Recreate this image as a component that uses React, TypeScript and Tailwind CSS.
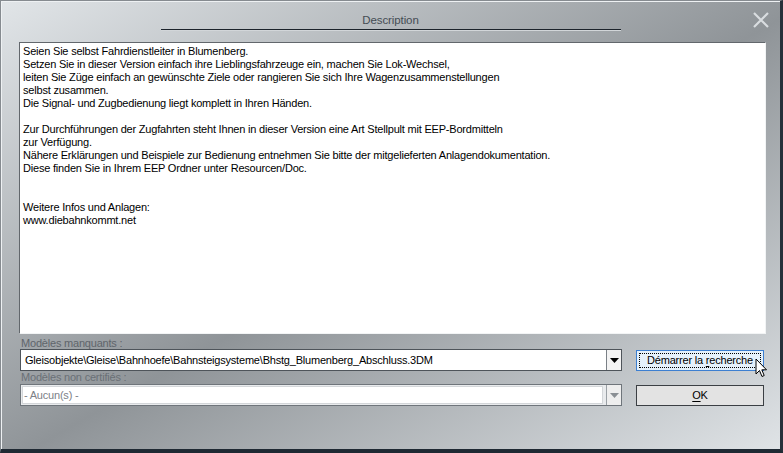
import React from "react";

const lines = [
  "Seien Sie selbst Fahrdienstleiter in Blumenberg.",
  "Setzen Sie in dieser Version einfach ihre Lieblingsfahrzeuge ein, machen Sie Lok-Wechsel,",
  "leiten Sie Züge einfach an gewünschte Ziele oder rangieren Sie sich Ihre Wagenzusammenstellungen",
  "selbst zusammen.",
  "Die Signal- und Zugbedienung liegt komplett in Ihren Händen.",
  "",
  "Zur Durchführungen der Zugfahrten steht Ihnen in dieser Version eine Art Stellpult mit EEP-Bordmitteln",
  "zur Verfügung.",
  "Nähere Erklärungen und Beispiele zur Bedienung entnehmen Sie bitte der mitgelieferten Anlagendokumentation.",
  "Diese finden Sie in Ihrem EEP Ordner unter Resourcen/Doc.",
  "",
  "",
  "Weitere Infos und Anlagen:",
  "www.diebahnkommt.net",
];

function Arrow({ color }: { color: string }) {
  return (
    <svg width="9" height="5" viewBox="0 0 9 5">
      <path d="M0 0 H9 L4.5 5 Z" fill={color} />
    </svg>
  );
}

export default function App() {
  return (
    <div
      className="relative w-[783px] h-[453px] overflow-hidden border-t border-l border-[#868b90] border-r-[3px] border-r-[#26303a] border-b-[4px] border-b-[#1f2933] shadow-[inset_1px_1px_0_#eef1f3] bg-[linear-gradient(to_bottom_right,#e1e5e8_0%,#8f9498_52%,#dfe3e6_100%)] text-[11px] tracking-[-0.2px]"
      style={{ fontFamily: '"Liberation Sans", Arial, sans-serif' }}
    >
      {/* Title */}
      <div className="mt-[12px] h-[14px] leading-[14px] text-center text-[#454c54] text-[11.5px] tracking-[-0.1px]">Description</div>
      <div className="mt-[2px] mx-auto w-[460px] h-px bg-[#1c232b]" />
      <div className="mx-auto w-[460px] h-px bg-[#d2d6d9]" />

      {/* Close button */}
      <div className="absolute top-[10px] right-[10px] w-[18px] h-[18px]">
        <svg width="18" height="18" viewBox="0 0 18 18">
          <path d="M2 2 L16 16 M16 2 L2 16" stroke="#d9dde0" strokeWidth="2.2" />
        </svg>
      </div>

      {/* Text area */}
      <div className="ml-[18px] mt-[11px] w-[747px] h-[292px] bg-white border-t border-l border-[#62676c] border-r border-b border-r-[#f2f4f5] border-b-[#f2f4f5] pl-[3px] pt-[2px] text-black leading-[13px]">
        {lines.map((l, i) => (
          <div key={i} className="h-[13px] whitespace-pre">
            {l}
          </div>
        ))}
      </div>

      {/* Bottom controls */}
      <div className="ml-[19px] mt-[3px] flex gap-[14px]">
        <div className="w-[602px] flex flex-col">
          <div className="h-[12px] leading-[12px] text-[#5f656b] pl-[1px]">Modèles manquants :</div>
          <div className="h-[22px] flex border border-[#4e545a] bg-white">
            <div className="flex-1 pl-[4px] leading-[20px] text-black whitespace-nowrap overflow-hidden">
              Gleisobjekte\Gleise\Bahnhoefe\Bahnsteigsysteme\Bhstg_Blumenberg_Abschluss.3DM
            </div>
            <div className="w-[15px] border-l border-[#7a8086] bg-[#f3f3f3] flex items-center justify-center">
              <Arrow color="#000" />
            </div>
          </div>
          <div className="h-[13px] leading-[13px] text-[#6a7076] pl-[1px]">Modèles non certifiés :</div>
          <div className="h-[22px] flex border border-[#6f757b] bg-[#e9ebed]">
            <div className="flex-1 m-[1px] mr-[3px] bg-white border border-[#d3d6d9] pl-[1px] leading-[16px] text-[#7c8187]">
              - Aucun(s) -
            </div>
            <div className="w-[15px] border-l border-[#9aa0a5] bg-[#eeeeee] flex items-center justify-center">
              <Arrow color="#8a8f94" />
            </div>
          </div>
        </div>
        <div className="w-[128px] flex flex-col pt-[13px]">
          <div className="h-[21px] border border-[#3c7fd1] bg-[#e5f1fb] p-[2px]">
            <div className="h-full border border-dotted border-black flex items-center justify-center text-black whitespace-nowrap">
              <span>
                Démarrer la <span className="underline underline-offset-2">r</span>echerche
              </span>
            </div>
          </div>
          <div className="mt-[14px] h-[21px] border border-[#3b3f44] bg-[#e3e3e3] flex items-center justify-center text-black">
            <span>
              <span className="underline underline-offset-2">O</span>K
            </span>
          </div>
        </div>
      </div>

      {/* Mouse cursor */}
      <svg className="absolute left-[754px] top-[357px]" width="14" height="21" viewBox="0 0 14 21">
        <path
          d="M1 1 L1 16 L4.5 12.5 L7 18.5 L9.2 17.5 L6.8 11.8 L11.5 11.8 Z"
          fill="#fff"
          stroke="#000"
          strokeWidth="1"
          strokeLinejoin="miter"
        />
      </svg>
    </div>
  );
}
